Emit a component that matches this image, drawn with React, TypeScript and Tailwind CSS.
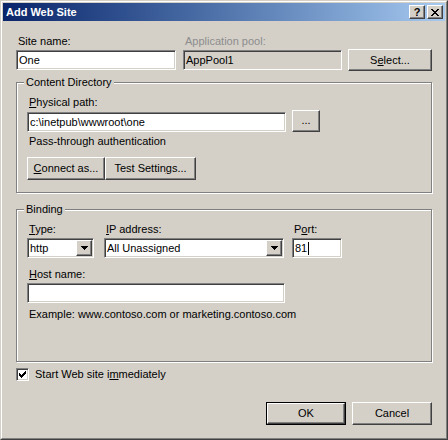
import React from "react";

type P = { className?: string; children?: React.ReactNode };

function Sunken({ className = "", children }: P) {
  return (
    <div
      className={`box-border border border-t-[#808080] border-l-[#808080] border-r-white border-b-white shadow-[inset_1px_1px_0_#404040,inset_-1px_-1px_0_#d4d0c8] flex items-center pl-[2px] leading-[13px] whitespace-nowrap ${className}`}
    >
      {children}
    </div>
  );
}

function Raised({ className = "", children }: P) {
  return (
    <div
      className={`box-border border border-t-white border-l-white border-r-[#404040] border-b-[#404040] shadow-[inset_-1px_-1px_0_#808080] bg-[#d4d0c8] flex items-center justify-center leading-[13px] whitespace-nowrap ${className}`}
    >
      {children}
    </div>
  );
}

function Arrow() {
  return (
    <svg width="7" height="4" viewBox="0 0 7 4" shapeRendering="crispEdges">
      <rect x="0" y="0" width="7" height="1" fill="#000" />
      <rect x="1" y="1" width="5" height="1" fill="#000" />
      <rect x="2" y="2" width="3" height="1" fill="#000" />
      <rect x="3" y="3" width="1" height="1" fill="#000" />
    </svg>
  );
}

function Combo({ className = "", text }: { className?: string; text: string }) {
  return (
    <div
      className={`box-border h-[20px] border border-t-[#808080] border-l-[#808080] border-r-white border-b-white shadow-[inset_1px_1px_0_#404040,inset_-1px_-1px_0_#d4d0c8] bg-white flex items-stretch py-[1px] pr-[1px] leading-[13px] ${className}`}
    >
      <div className="flex-1 flex items-center pl-[2px] whitespace-nowrap">{text}</div>
      <Raised className="w-[16px]">
        <Arrow />
      </Raised>
    </div>
  );
}

function Group({ className = "", title, children }: P & { title: string }) {
  return (
    <div
      className={`relative box-border border border-[#808080] shadow-[inset_1px_1px_0_#fff,1px_1px_0_#fff] ${className}`}
    >
      <span className="absolute top-[-7px] left-[7px] px-[2px] bg-[#d4d0c8] leading-[13px]">{title}</span>
      {children}
    </div>
  );
}

function Label({ className = "", children }: P) {
  return <div className={`h-[13px] leading-[13px] pl-[2px] whitespace-nowrap ${className}`}>{children}</div>;
}

export default function App() {
  return (
    <div className="w-[448px] h-[440px] box-border border border-t-[#d4d0c8] border-l-[#d4d0c8] border-r-[#404040] border-b-[#404040] bg-[#d4d0c8] font-['Liberation_Sans',Arial,sans-serif] text-[11px] text-black select-none">
      <div className="w-full h-full box-border border border-t-white border-l-white border-r-[#808080] border-b-[#808080]">
        <div className="w-full h-full box-border p-[1px] flex flex-col">
          {/* Title bar */}
          <div className="h-[18px] flex items-center bg-linear-to-r from-[#0a246a] to-[#a6caf0] pl-[3px] pr-[2px]">
            <span className="flex-1 text-white font-bold text-[11px] leading-[13px]">Add Web Site</span>
            <Raised className="w-[16px] h-[14px]">
              <span className="font-bold text-[11px] leading-[11px] mt-[1px]">?</span>
            </Raised>
            <Raised className="w-[16px] h-[14px] ml-[2px]">
              <svg width="8" height="7" viewBox="0 0 8 7" shapeRendering="crispEdges">
                <rect x="0" y="0" width="2" height="1" fill="#000" />
                <rect x="6" y="0" width="2" height="1" fill="#000" />
                <rect x="1" y="1" width="2" height="1" fill="#000" />
                <rect x="5" y="1" width="2" height="1" fill="#000" />
                <rect x="2" y="2" width="4" height="1" fill="#000" />
                <rect x="3" y="3" width="2" height="1" fill="#000" />
                <rect x="2" y="4" width="4" height="1" fill="#000" />
                <rect x="1" y="5" width="2" height="1" fill="#000" />
                <rect x="5" y="5" width="2" height="1" fill="#000" />
                <rect x="0" y="6" width="2" height="1" fill="#000" />
                <rect x="6" y="6" width="2" height="1" fill="#000" />
              </svg>
            </Raised>
          </div>

          {/* Client */}
          <div className="flex flex-col px-[13px] pt-[14px]">
            <div className="flex items-end">
              <div className="flex flex-col w-[160px]">
                <Label>Site name:</Label>
                <Sunken className="mt-[2px] h-[20px] bg-white">One</Sunken>
              </div>
              <div className="flex flex-col w-[159px] ml-[7px]">
                <Label className="text-[#8d8d8d]">Application pool:</Label>
                <Sunken className="mt-[2px] h-[20px] bg-[#d4d0c8]">AppPool1</Sunken>
              </div>
              <Raised className="ml-[6px] w-[84px] h-[22px] mb-[-1px]">
                <span>
                  S<u>e</u>lect...
                </span>
              </Raised>
            </div>

            <Group title="Content Directory" className="mt-[12px] h-[111px] pt-[13px] pl-[10px] flex flex-col">
              <Label>
                <u>P</u>hysical path:
              </Label>
              <div className="flex items-end mt-[1px]">
                <Sunken className="w-[259px] h-[20px] bg-white">c:\inetpub\wwwroot\one</Sunken>
                <Raised className="ml-[6px] w-[28px] h-[22px]">
                  <span className="mt-[-1px]">...</span>
                </Raised>
              </div>
              <Label className="mt-[3px]">Pass-through authentication</Label>
              <div className="flex mt-[9px]">
                <Raised className="w-[78px] h-[23px]">
                  <span>
                    <u>C</u>onnect as...
                  </span>
                </Raised>
                <Raised className="w-[91px] h-[23px]">
                  <span>
                    Test Settin<u>g</u>s...
                  </span>
                </Raised>
              </div>
            </Group>

            <Group title="Binding" className="mt-[16px] h-[153px] pt-[13px] pl-[10px] flex flex-col">
              <div className="flex">
                <Label className="w-[67px]">
                  <u>T</u>ype:
                </Label>
                <Label className="w-[180px] ml-[10px]">
                  <u>I</u>P address:
                </Label>
                <Label className="w-[50px] ml-[8px]">
                  P<u>o</u>rt:
                </Label>
              </div>
              <div className="flex mt-[2px]">
                <Combo className="w-[67px]" text="http" />
                <Combo className="w-[180px] ml-[10px]" text="All Unassigned" />
                <Sunken className="w-[50px] h-[20px] ml-[8px] bg-white">
                  <span>81</span>
                  <span className="inline-block w-[1px] h-[13px] bg-black ml-[1px]" />
                </Sunken>
              </div>
              <Label className="mt-[10px]">
                <u>H</u>ost name:
              </Label>
              <Sunken className="mt-[2px] w-[258px] h-[20px] bg-white" />
              <Label className="mt-[5px]">Example: www.contoso.com or marketing.contoso.com</Label>
            </Group>

            <div className="flex items-center mt-[6px] h-[13px]">
              <div className="box-border w-[13px] h-[13px] border border-t-[#808080] border-l-[#808080] border-r-white border-b-white shadow-[inset_1px_1px_0_#404040,inset_-1px_-1px_0_#d4d0c8] bg-white flex items-center justify-center">
                <svg width="7" height="7" viewBox="0 0 7 7" shapeRendering="crispEdges">
                  <rect x="6" y="0" width="1" height="1" fill="#000" />
                  <rect x="5" y="1" width="2" height="1" fill="#000" />
                  <rect x="0" y="2" width="1" height="1" fill="#000" />
                  <rect x="4" y="2" width="3" height="1" fill="#000" />
                  <rect x="0" y="3" width="2" height="1" fill="#000" />
                  <rect x="3" y="3" width="3" height="1" fill="#000" />
                  <rect x="0" y="4" width="5" height="1" fill="#000" />
                  <rect x="1" y="5" width="3" height="1" fill="#000" />
                  <rect x="2" y="6" width="1" height="1" fill="#000" />
                </svg>
              </div>
              <span className="ml-[6px] leading-[13px]">
                Start Web site i<u>m</u>mediately
              </span>
            </div>

            <div className="flex justify-end mt-[21px]">
              <div className="box-border border border-black">
                <Raised className="w-[78px] h-[21px]">OK</Raised>
              </div>
              <Raised className="ml-[6px] w-[80px] h-[23px]">Cancel</Raised>
            </div>
          </div>
        </div>
      </div>
    </div>
  );
}
